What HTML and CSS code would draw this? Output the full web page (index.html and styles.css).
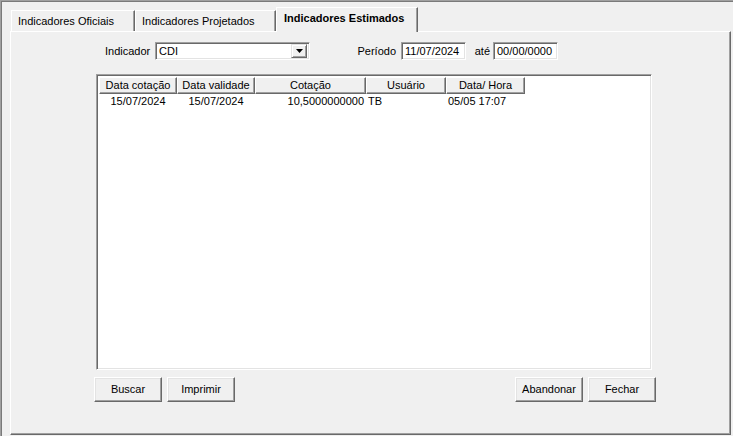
FILE: index.html
```html
<!DOCTYPE html>
<html>
	<head>
		<meta charset="utf-8">
		<title>Indicadores</title>
		<link rel="stylesheet" href="styles.css">
	</head>
	<body>
		<div class="window">
			<div class="tabs">
				<div class="tab t1">Indicadores Oficiais</div>
				<div class="tab t2">Indicadores Projetados</div>
				<div class="tab active t3">Indicadores Estimados</div>
			</div>
			<div class="panel">
				<div class="filtros">
					<span class="lbl lbl-ind">Indicador</span>
					<div class="combo">
						<span class="combo-txt">CDI</span>
						<span class="drop">
							<svg width="7" height="4" viewBox="0 0 7 4"><path d="M0 0h7L3.5 4z" fill="#000"/></svg>
						</span>
					</div>
					<span class="lbl lbl-per">Período</span>
					<div class="edit">11/07/2024</div>
					<span class="lbl lbl-ate">até</span>
					<div class="edit">00/00/0000</div>
				</div>
				<div class="lista">
					<div class="grade">
						<div class="cab">Data cotação</div>
						<div class="cab">Data validade</div>
						<div class="cab">Cotação</div>
						<div class="cab">Usuário</div>
						<div class="cab">Data/ Hora</div>
						<div class="cel c">15/07/2024</div>
						<div class="cel c">15/07/2024</div>
						<div class="cel r">10,5000000000</div>
						<div class="cel">TB</div>
						<div class="cel">05/05 17:07</div>
					</div>
				</div>
				<div class="botoes">
					<div class="grupo">
						<div class="btn">Buscar</div>
						<div class="btn">Imprimir</div>
					</div>
					<div class="grupo">
						<div class="btn">Abandonar</div>
						<div class="btn">Fechar</div>
					</div>
				</div>
			</div>
		</div>
	</body>
</html>
```

FILE: styles.css
```css
body {
	margin: 0;
	background-color: #f0f0f0;
	font-family: "Liberation Sans", Arial, sans-serif;
	font-size: 11px;
	color: #000;
}

.window {
	width: 733px;
	height: 436px;
	box-sizing: border-box;
	border-top: 1px solid #a0a0a0;
	border-left: 1px solid #a0a0a0;
	box-shadow: inset 1px 1px 0 #7a7a7a;
	padding: 6px 2px 1px 9px;
	display: flex;
	flex-direction: column;
}

.tabs {
	display: flex;
	align-items: flex-start;
	height: 25px;
	margin-left: 1px;
	margin-bottom: -1px;
	position: relative;
	z-index: 1;
}

.tab {
	box-sizing: border-box;
	height: 21px;
	margin-top: 3px;
	padding: 4px 0 0 6px;
	border-top: 1px solid #fff;
	border-left: 1px solid #fff;
	border-right: 1px solid #696969;
	box-shadow: inset -1px 0 0 #a0a0a0;
	background-color: #f0f0f0;
	white-space: nowrap;
}

.t1 {
	width: 124px;
}

.t2 {
	width: 141px;
}

.t3 {
	width: 142px;
}

.tab.active {
	height: 25px;
	margin-top: 0;
	padding: 4px 0 0 7px;
	font-weight: bold;
}

.panel {
	flex: 1;
	box-sizing: border-box;
	border-top: 1px solid #fff;
	border-left: 1px solid #fff;
	border-right: 1px solid #696969;
	border-bottom: 1px solid #696969;
	box-shadow: inset -1px -1px 0 #a0a0a0;
	padding-top: 10px;
}

.filtros {
	display: flex;
	align-items: center;
	height: 18px;
	padding-left: 93px;
}

.lbl {
	display: block;
	box-sizing: border-box;
}

.lbl-ind {
	width: 51px;
	padding-left: 1px;
}

.lbl-per {
	width: 91px;
	text-align: right;
	padding-right: 5px;
}

.lbl-ate {
	width: 27px;
	text-align: right;
	padding-right: 3px;
}

.combo,
.edit {
	box-sizing: border-box;
	height: 18px;
	background-color: #fff;
	border-top: 1px solid #a0a0a0;
	border-left: 1px solid #a0a0a0;
	border-right: 1px solid #fff;
	border-bottom: 1px solid #fff;
	box-shadow: inset 1px 1px 0 #696969, inset -1px -1px 0 #e3e3e3;
}

.combo {
	width: 155px;
	display: flex;
	align-items: center;
	justify-content: space-between;
	padding: 0 2px 0 3px;
}

.edit {
	width: 65px;
	padding: 2px 0 0 3px;
	line-height: 13px;
}

.drop {
	box-sizing: border-box;
	width: 16px;
	height: 14px;
	display: flex;
	align-items: center;
	justify-content: center;
	background-color: #f0f0f0;
	border-top: 1px solid #e3e3e3;
	border-left: 1px solid #e3e3e3;
	border-right: 1px solid #696969;
	border-bottom: 1px solid #696969;
	box-shadow: inset 1px 1px 0 #fff, inset -1px -1px 0 #a0a0a0;
}

.lista {
	box-sizing: border-box;
	width: 556px;
	height: 296px;
	margin: 14px 0 0 85px;
	background-color: #fff;
	border-top: 1px solid #a0a0a0;
	border-left: 1px solid #a0a0a0;
	border-right: 1px solid #fff;
	border-bottom: 1px solid #fff;
	box-shadow: inset 1px 1px 0 #696969, inset -1px -1px 0 #e3e3e3;
	padding: 2px 0 0 2px;
}

.grade {
	display: grid;
	grid-template-columns: 78px 78px 111px 80px 79px;
	grid-template-rows: 17px 15px;
}

.cab {
	box-sizing: border-box;
	background-color: #f0f0f0;
	border-top: 1px solid #fff;
	border-left: 1px solid #fff;
	border-right: 1px solid #696969;
	border-bottom: 1px solid #696969;
	box-shadow: inset -1px -1px 0 #a0a0a0;
	text-align: center;
	line-height: 15px;
	white-space: nowrap;
}

.cel {
	padding: 0 2px;
	line-height: 15px;
	white-space: nowrap;
}

.c {
	text-align: center;
}

.r {
	text-align: right;
}

.botoes {
	display: flex;
	justify-content: space-between;
	width: 562px;
	margin: 7px 0 0 83px;
}

.grupo {
	display: flex;
	gap: 5px;
}

.btn {
	box-sizing: border-box;
	width: 68px;
	height: 25px;
	line-height: 22px;
	text-align: center;
	background-color: #f0f0f0;
	border-top: 1px solid #fff;
	border-left: 1px solid #fff;
	border-right: 1px solid #696969;
	border-bottom: 1px solid #696969;
	box-shadow: inset -1px -1px 0 #a0a0a0, inset 1px 1px 0 #e3e3e3;
}
```
